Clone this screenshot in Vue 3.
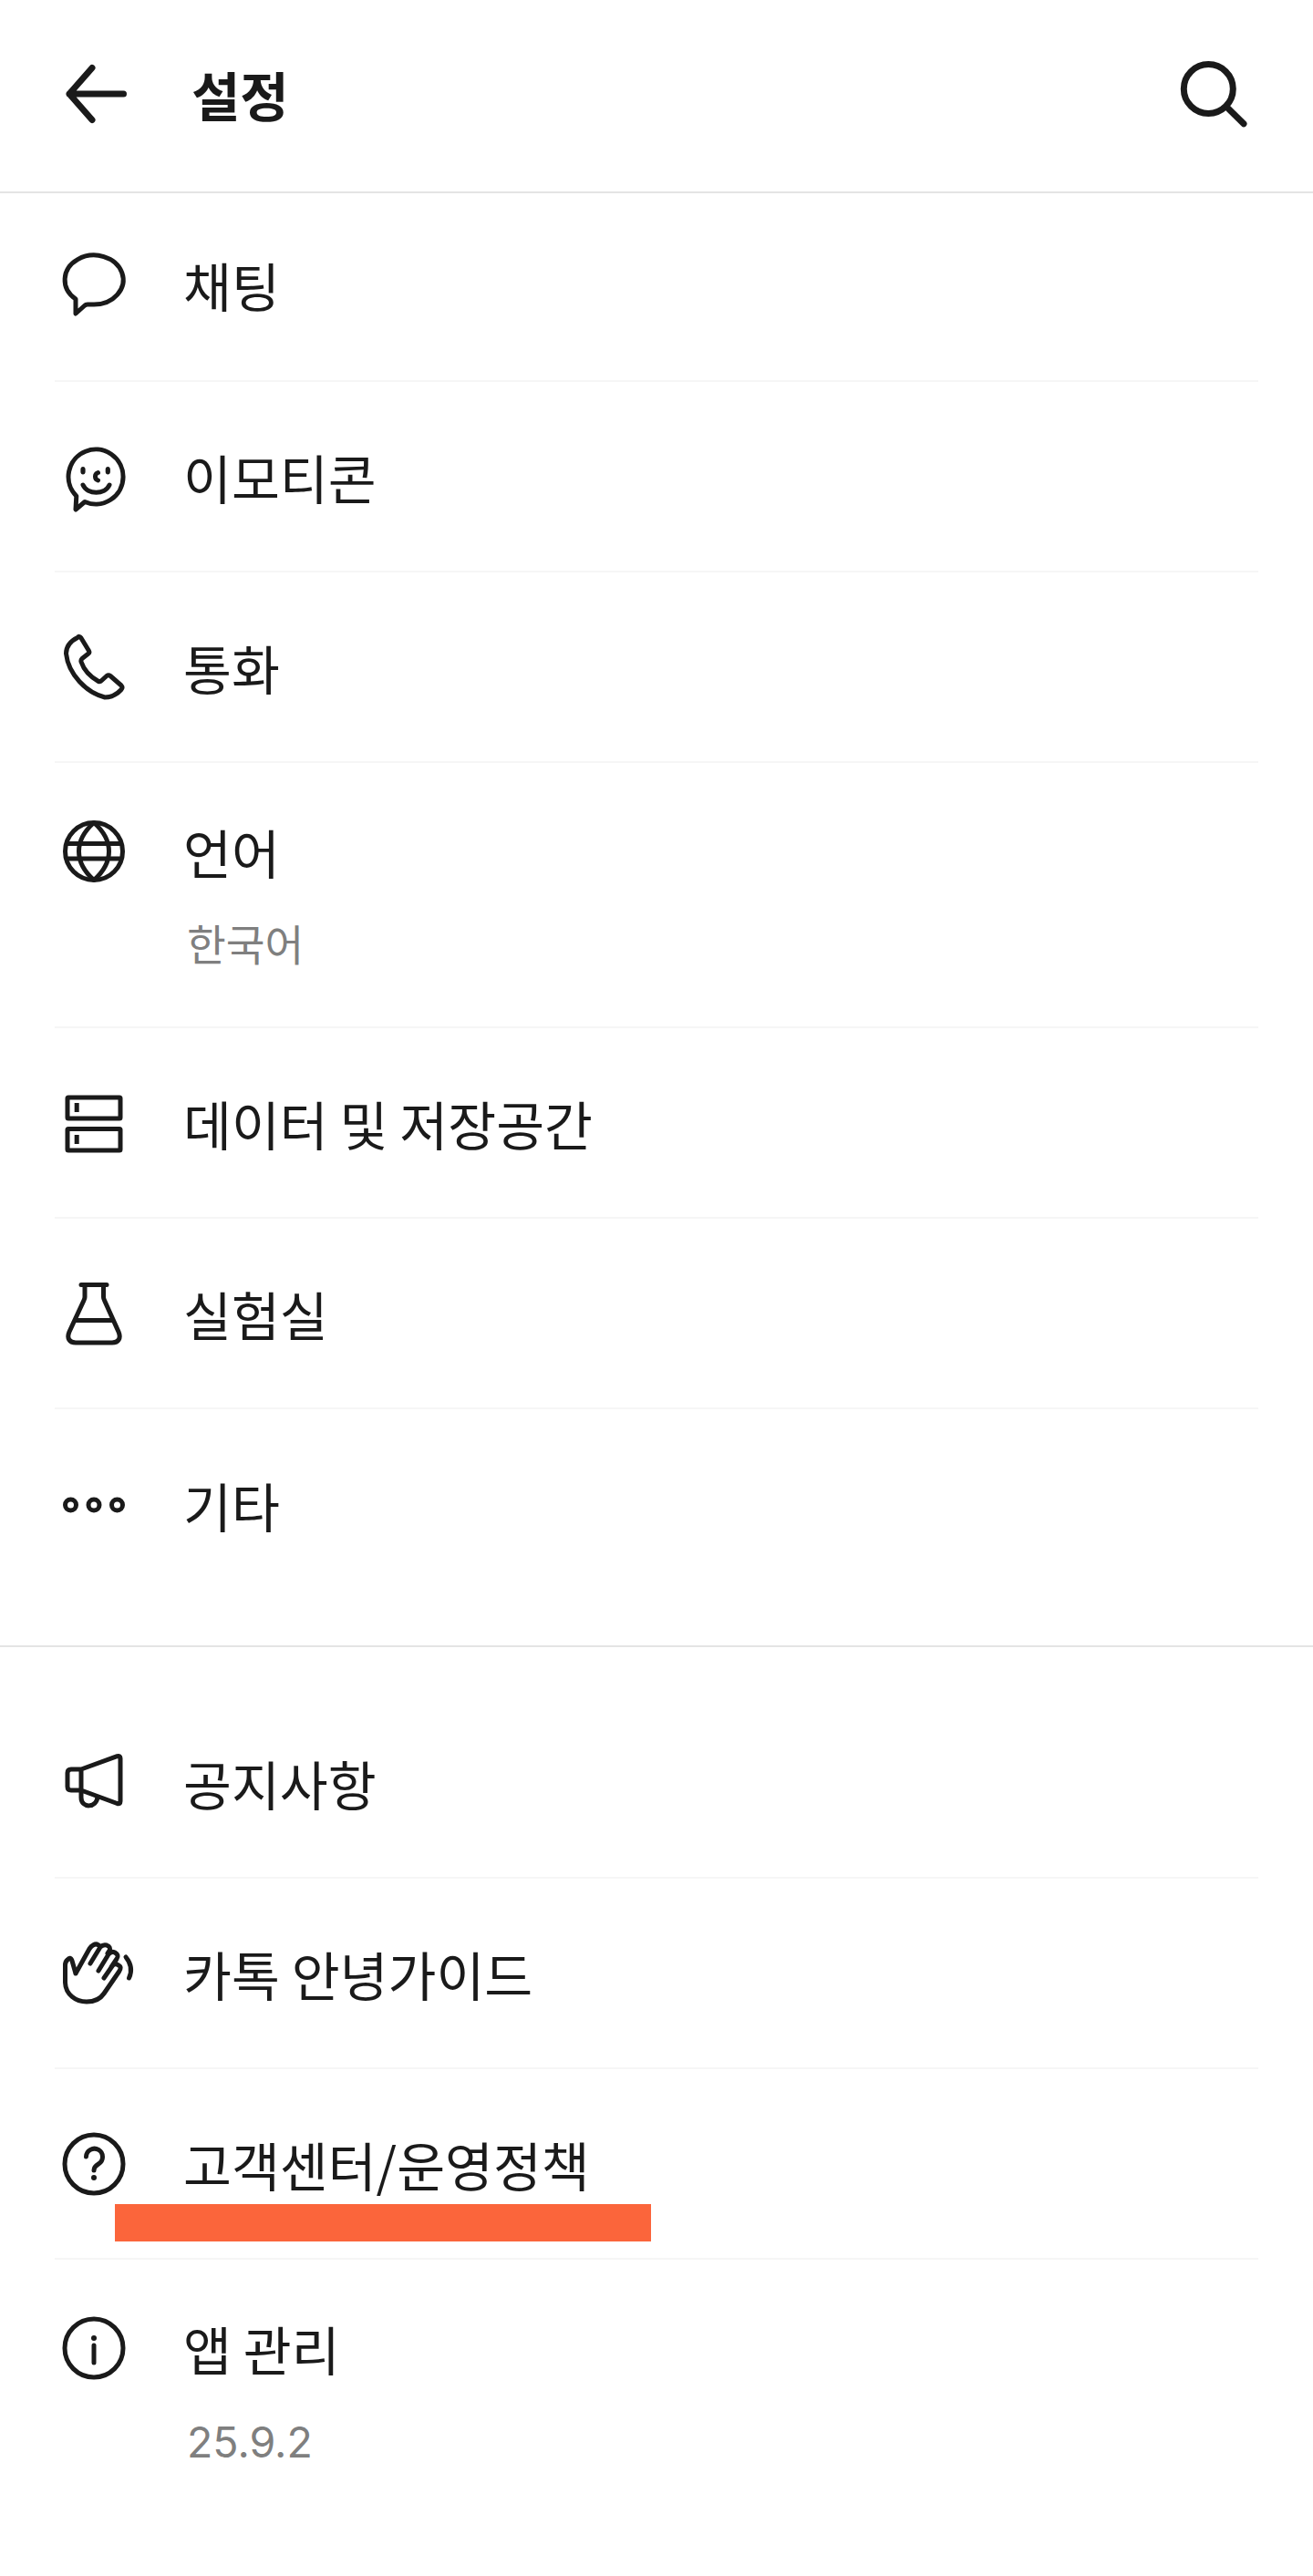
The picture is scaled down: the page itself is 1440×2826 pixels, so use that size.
<script setup>
const mainItems = [
  { icon: 'chat', label: '채팅' },
  { icon: 'emoticon', label: '이모티콘' },
  { icon: 'call', label: '통화' },
  { icon: 'globe', label: '언어', sub: '한국어' },
  { icon: 'storage', label: '데이터 및 저장공간' },
  { icon: 'flask', label: '실험실' },
  { icon: 'more', label: '기타' }
]

const infoItems = [
  { icon: 'notice', label: '공지사항' },
  { icon: 'hand', label: '카톡 안녕가이드' },
  { icon: 'help', label: '고객센터/운영정책' },
  { icon: 'info', label: '앱 관리', sub: '25.9.2' }
]

const sections = [
  { name: 'main', items: mainItems },
  { name: 'info', items: infoItems }
]
</script>

<template>
  <div class="page">
    <header class="top-bar">
      <svg class="icon heavy" viewBox="0 0 80 80">
        <path d="M72.500 40H13M38 11.500L13 40L38 68.500" />
      </svg>
      <h1 class="page-title">설정</h1>
      <svg class="icon heavy search" viewBox="0 0 80 80">
        <circle cx="35.300" cy="34.500" r="27" />
        <path d="M56 55L74 72.700" />
      </svg>
    </header>

    <section v-for="section in sections" :key="section.name" class="section" :class="section.name">
      <div v-for="item in section.items" :key="item.label" class="row" :class="{ tall: item.sub }">
        <svg class="icon" viewBox="0 0 80 80">
          <template v-if="item.icon === 'chat'">
            <path d="M20 56A32 27 0 1 1 40 62H33Q31 62 29.500 63.500L20 72Z" />
          </template>
          <template v-else-if="item.icon === 'emoticon'">
            <path d="M20.800 61.200A30 30 0 1 1 30 67.500L20 76Z" />
            <path class="solid" d="M28 29c1.500 0 2.600 1.200 2.600 2.800v3c0 1.600-1.100 2.800-2.600 2.800s-2.600-1.200-2.600-2.800v-3c0-1.600 1.100-2.800 2.600-2.800zM55.300 29c1.500 0 2.600 1.200 2.600 2.800v3c0 1.600-1.100 2.800-2.600 2.800s-2.600-1.200-2.600-2.800v-3c0-1.600 1.100-2.800 2.600-2.800z" />
            <path d="M44.500 35.500A4.500 4.500 0 0 0 44.500 44M28 49C33 60 52 60 57 49" />
          </template>
          <template v-else-if="item.icon === 'call'">
            <path d="M22 7.500Q24 5 26 8L34.500 22Q35.500 24 34 25L27 30.500Q25.500 32 26 34C29 43 37 51 45 55.500Q47 56 48.500 54.500L54 49.500Q56 48 58 49.500L70 60Q72 62 70 64.500C65 70 58 73 52 73C32 68 12 48 9.500 25C9.500 17 15 11 22 7.500Z" />
          </template>
          <template v-else-if="item.icon === 'globe'">
            <circle cx="40" cy="40" r="31.500" />
            <path d="M40 8.500C18 28 18 52 40 71.500C62 52 62 28 40 8.500ZM11 31.500H69M11 48H69" />
          </template>
          <template v-else-if="item.icon === 'storage'">
            <rect x="11" y="12" width="58" height="23" rx="1" />
            <rect x="11" y="46.500" width="58" height="23.500" rx="1" />
            <path class="solid" d="M18.700 18h5v10h-5zM18.700 53h5v10h-5z" />
          </template>
          <template v-else-if="item.icon === 'flask'">
            <path d="M26 8.500H54M30 8.500V22Q30 23.500 29 25.500L13 60C10 67 13 72 20 72H60C67 72 70 67 67 60L51.500 25.500Q50.500 23.500 50.500 22V8.500M20.500 47.500H59.500" />
          </template>
          <template v-else-if="item.icon === 'more'">
            <circle cx="14.500" cy="40" r="6" />
            <circle cx="40" cy="40" r="6" />
            <circle cx="65.500" cy="40" r="6" />
          </template>
          <template v-else-if="item.icon === 'notice'">
            <path d="M26 25L65.500 10.700Q69 10 69 13V60Q69 63.500 65.500 62.500L26 48ZM26 25H15Q11 25 11 29V44Q11 48 15 48H26M26 48V56C26 68 43 68 44 55" />
          </template>
          <template v-else-if="item.icon === 'hand'">
            <path d="M20 40L16 26Q14 21 11 25Q8.500 27 8.500 31V50C9 63 20 71 32 71C40 71 47 68 51 62L67.500 38Q71 33 67 31Q63 28 60 32L51 45M59 33L65 24Q68 20 63 17Q59 15 56 19L45 37M55 18L57 15Q59 11 54 9Q50 8 47 11L36 29M47 11Q44 6 39 9Q37 10 35 13L20 40M75 22Q84 33 78.500 45" />
          </template>
          <template v-else-if="item.icon === 'help'">
            <circle cx="40" cy="40" r="32" />
            <path d="M31.500 32A9 9 0 1 1 45 40Q40 43 40 47" />
            <circle class="solid" cx="40" cy="55" r="3" />
          </template>
          <template v-else-if="item.icon === 'info'">
            <circle cx="40" cy="40" r="32" />
            <circle class="solid" cx="40" cy="29" r="3" />
            <path d="M40 37V56" />
          </template>
        </svg>
        <div class="text">
          <span class="label">{{ item.label }}</span>
          <span v-if="item.sub" class="sub">{{ item.sub }}</span>
        </div>
      </div>
    </section>

    <!-- masked region in the screenshot -->
    <div class="redaction"></div>
  </div>
</template>

<style>
html, body {
  background: #fff;
}
</style>

<style scoped>
.page {
  position: relative;
  width: 1440px;
  min-height: 2826px;
  background: #fff;
  color: #1a1a1a;
  font-family: "Noto Sans CJK KR", "Noto Sans", sans-serif;
}

.top-bar {
  display: flex;
  align-items: center;
  box-sizing: border-box;
  height: 212px;
  padding: 0 70px 4px 63px;
  border-bottom: 2px solid #e4e4e4;
}

.page-title {
  flex: 1;
  margin: 0 0 0 67px;
  font-size: 58px;
  font-weight: 700;
  line-height: 80px;
}

.icon {
  flex: none;
  width: 80px;
  height: 80px;
  overflow: visible;
  fill: none;
  stroke: #1a1a1a;
  stroke-width: 5;
  stroke-linecap: round;
  stroke-linejoin: round;
}

.icon.heavy {
  stroke-width: 7;
}

.solid {
  fill: #1a1a1a;
  stroke: none;
}

.section.main {
  padding-bottom: 50px;
  border-bottom: 2px solid #e4e4e4;
}

.section.info {
  padding-top: 45px;
}

.row {
  display: flex;
  align-items: center;
  box-sizing: border-box;
  height: 209px;
  margin: 0 60px;
  padding-left: 3px;
  border-bottom: 2px solid #f6f6f6;
}

.row:first-child {
  height: 207px;
  padding-bottom: 6px;
}

.section.info .row:first-child {
  height: 209px;
  padding-bottom: 0;
}

.row:last-child {
  border-bottom: none;
}

.row.tall {
  height: 291px;
  align-items: flex-start;
  padding-top: 57px;
}

.text {
  display: flex;
  flex-direction: column;
  margin-left: 58px;
}

.label {
  font-size: 57.5px;
  line-height: 80px;
  white-space: nowrap;
}

.sub {
  margin: 33px 0 0 4px;
  font-family: Inter, "Noto Sans CJK KR", sans-serif;
  font-size: 46.5px;
  line-height: 60px;
  color: #7f7f7f;
}

.redaction {
  position: absolute;
  left: 126px;
  top: 2418px;
  width: 588px;
  height: 41px;
  background: #fb653b;
}
</style>
